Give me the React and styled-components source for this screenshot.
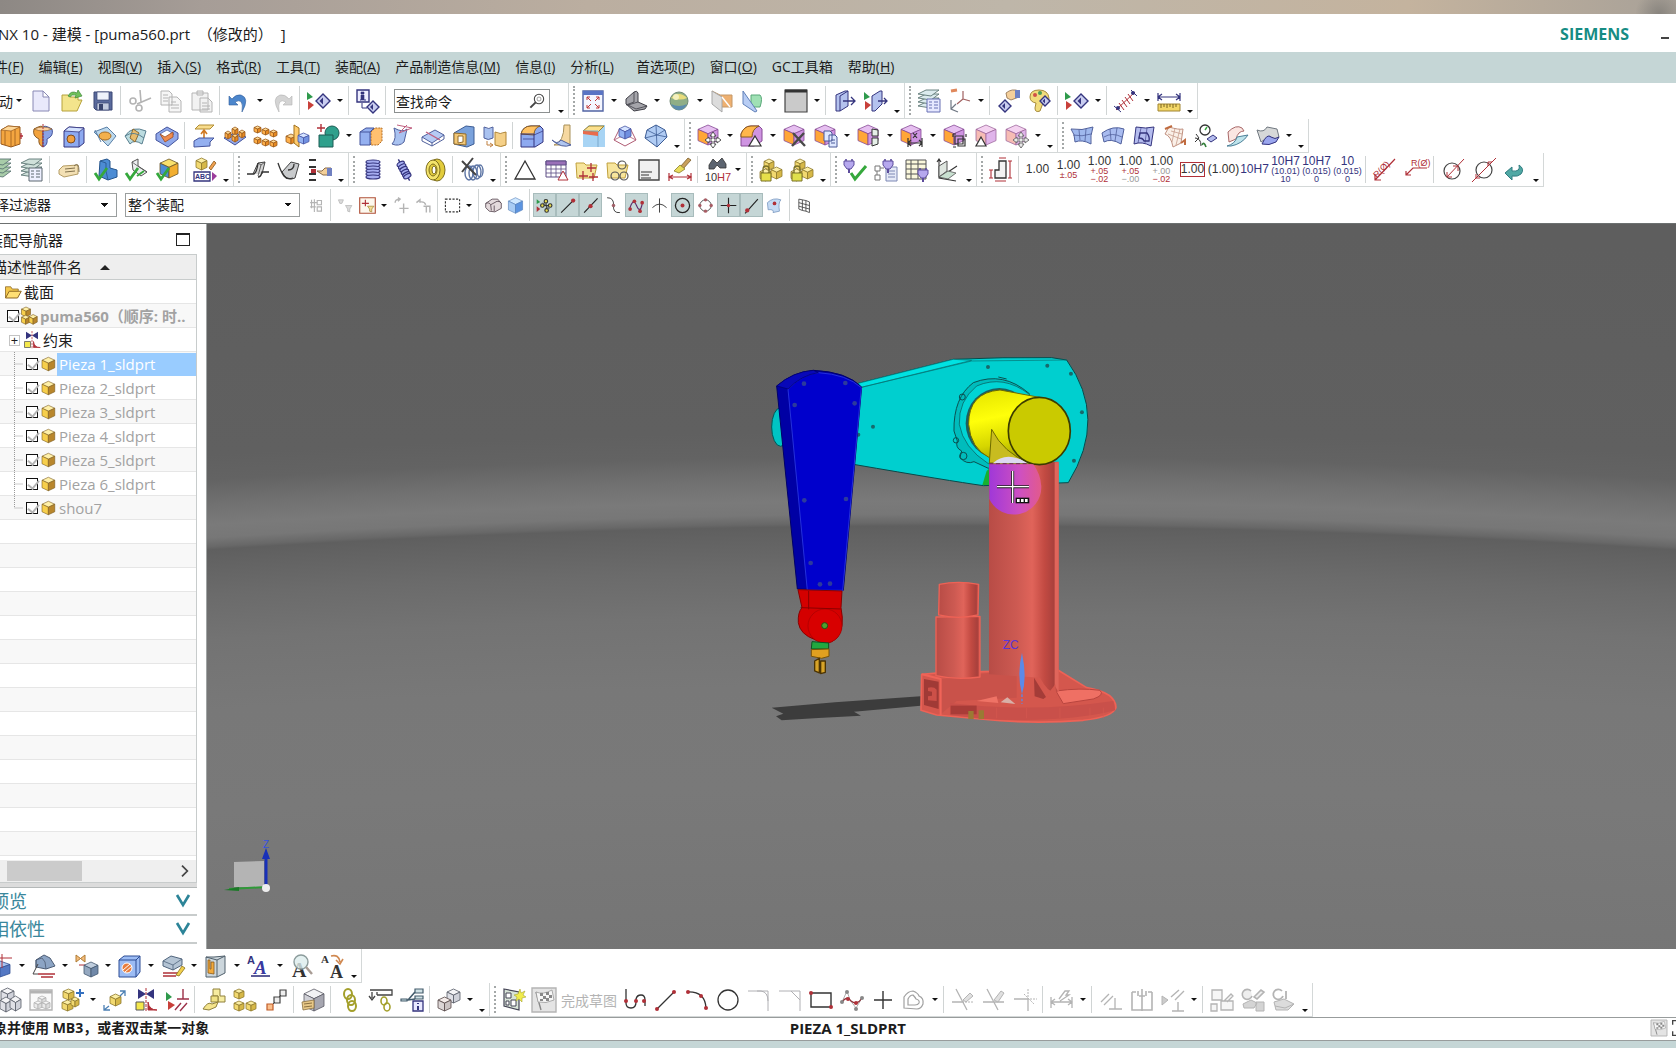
import React from 'react';
import styled, { createGlobalStyle } from 'styled-components';

const navy = '#34347e';
const red = '#b03038';
const dim = '#b4b4b4';

const blue = ['#d5e3ff', '#93b2f2', '#7090e0', '#4656a4'];
const orange = ['#ffdb95', '#ffb04a', '#e88a22', '#9a5a1c'];
const yellow = ['#fbeea4', '#f2d970', '#d6b848', '#8f7a2c'];
const grey = ['#f2f2f4', '#d0d0d6', '#a6a6b0', '#5a5a64'];
const pale = ['#f8f8f8', '#eaeaea', '#dcdcdc', '#b4b4b4'];
const violet = ['#e6bff0', '#ffa637', '#cf94e2', '#874a96'];
const pink = ['#f4d2f0', '#f6bcb4', '#dfb4ea', '#a06a9e'];
const ghost = ['#f4f4f6', '#dfe0e6', '#d0d2da', '#555a66'];

function P({ d, f = 'none', s = '#444450', w = 1, ...rest }) {
  return <path d={d} fill={f} stroke={s} strokeWidth={w} {...rest} />;
}

function Box({ x = 2, y = 2, w = 20, h = 20, c = blue }) {
  const m = x + w / 2;
  const a = y + h * 0.22;
  const b = y + h * 0.44;
  const e = y + h * 0.78;
  return (
    <g stroke={c[3]} strokeWidth="0.8" strokeLinejoin="round">
      <path fill={c[0]} d={`M${m} ${y}L${x + w} ${a}L${m} ${b}L${x} ${a}Z`} />
      <path fill={c[1]} d={`M${x} ${a}L${m} ${b}V${y + h}L${x} ${e}Z`} />
      <path fill={c[2]} d={`M${x + w} ${a}L${m} ${b}V${y + h}L${x + w} ${e}Z`} />
    </g>
  );
}

function Dot({ x, y, r = 2, c = red }) {
  return <circle cx={x} cy={y} r={r} fill={c} />;
}

const Diamond = ({ x, y, r = 6 }) => (
  <g>
    <P d={`M${x - r} ${y}L${x} ${y - r}L${x + r} ${y}L${x} ${y + r}Z`} f="#c9cdf0" s={navy} w={1.4} />
    <P d={`M${x - r / 2} ${y}L${x} ${y - r / 2}V${y + r / 2}Z`} f={navy} s="none" />
  </g>
);

const Play = ({ x = 0 }) => (
  <g>
    <P d={`M${x} 3v8l6-3z`} f="#2f9a4c" s="none" />
    <P d={`M${x + 1} 12v9l6-5z`} f="#c8403a" s="none" />
  </g>
);

const Stack = ({ tint = '#bcd8d4' }) => (
  <g>
    {[16, 12, 8, 4].map((y) => (
      <P key={y} d={`M1 ${y + 1}L9 ${y - 3}H22L14 ${y + 3}Z`} f={tint} s="#5c7674" w={0.9} />
    ))}
  </g>
);

const Move = ({ s = '#444', f = '#fff' }) => (
  <P
    d="M16 8l3 4h-2v3h3v-2l4 3-4 3v-2h-3v3h2l-3 4-3-4h2v-3h-3v2l-4-3 4-3v2h3v-3h-2z"
    f={f}
    s={s}
    w={0.9}
  />
);

const Sheet = ({ f = '#b7c8f0', s = '#50609c' }) => (
  <P d="M1 5Q12 7 23 3Q20 12 21 20Q12 15 5 18Q5 10 1 5Z" f={f} s={s} />
);

const Check = ({ x = 0, y = 0 }) => (
  <P d={`M${x + 1} ${y + 15}l4 6l8-11`} s="#35a83c" w={2.8} />
);

const Coil = ({ s = navy }) => (
  <g>
    {[4, 7, 10, 13, 16, 19].map((y) => (
      <ellipse key={y} cx="12" cy={y} rx="7" ry="2" fill="#a5adf0" stroke={s} strokeWidth="1.2" />
    ))}
  </g>
);

const Folder = () => (
  <P d="M1 5h8l2 2h11l-3 13H2z" f="#f7e59c" s="#c0a03c" />
);

const Arm = ({ c = yellow }) => (
  <g>
    <Box x={5} y={1} w={10} h={11} c={c} />
    <Box x={1} y={11} w={11} h={12} c={c} />
    <Box x={12} y={9} w={11} h={12} c={c} />
  </g>
);

const Lock = ({ c = '#e6df4a' }) => (
  <g>
    <P d="M4 15v-4a3 3 0 0 1 6 0v4" s="#7a7228" w={1.3} />
    <P d="M2 15h10v8H2z" f={c} s="#7a7228" />
  </g>
);

const Plug = ({ x = 0 }) => (
  <g transform={`translate(${x} 0)`}>
    <P d="M3 1v3M9 1v3" s="#5c4c9c" w={1.6} />
    <P d="M1 3h10v4l-3 4H4l-3-4z" f="#b6a8ee" s="#5c4c9c" />
    <P d="M6 11v4" s="#5c4c9c" w={2} />
  </g>
);

const Chain = () => (
  <g fill="none" stroke="#a4a02c" strokeWidth="2">
    <ellipse cx="10" cy="6" rx="4" ry="5" />
    <ellipse cx="13" cy="12" rx="4" ry="5" />
    <ellipse cx="14" cy="18" rx="4" ry="5" />
  </g>
);

const icons = {
  fresh: <P d="M4 2h10l6 6v14H4zM14 2v6h6" f="#e9e9fb" s="#8888b4" />,
  open: (
    <g>
      <P d="M2 6h6l2 2h8v3l4 0-5 11H2z" f="#f3e48c" s="#b6a23c" />
      <P d="M8 7q3-6 9-3l1-3 4 6-7 2 1-3q-4-1-6 2z" f="#6fc05a" s="#3f8a3a" w={0.7} />
    </g>
  ),
  save: (
    <g>
      <P d="M3 3h18v18H5l-2-2z" f="#5a6a9c" s="#3a4674" />
      <P d="M6 3h12v8H6z" f="#eef2fa" s="#3a4674" w={0.7} />
      <P d="M6 14h12v7H6z" f="#c2cade" s="#3a4674" w={0.7} />
      <P d="M8 15h4v6H8z" f="#39446e" s="none" />
    </g>
  ),
  cut: (
    <g>
      <P d="M12 1l1 12M23 9L9 15" s={dim} w={1.6} />
      <circle cx="5" cy="12" r="3" fill="none" stroke={dim} strokeWidth="1.6" />
      <circle cx="11" cy="19" r="3" fill="none" stroke={dim} strokeWidth="1.6" />
    </g>
  ),
  copy: <P d="M2 2h8l3 3v11H2zM10 8h8l4 4v11H10zM4 6h5M4 9h5M4 12h5M12 13h5M12 16h8M12 19h8" f="#f6f6f6" s={dim} />,
  paste: <P d="M2 4h16v17H2zM7 2h6v4H7zM10 9h8l4 4v10H10zM12 14h5M12 17h8M12 20h8" f="#f2f2f2" s={dim} />,
  undo: <P d="M2 7v9h9l-3-3q9-5 7 10q8-14-1-17q-5-1-9 4z" f="#4c86cc" s="#34609c" w={0.6} />,
  redo: <P d="M22 7v9h-9l3-3q-9-5-7 10q-8-14 1-17q5-1 9 4z" f="#d4d4d4" s={dim} w={0.6} />,
  play: (
    <g>
      <Play />
      <Diamond x={16} y={12} r={7} />
    </g>
  ),
  info: (
    <g>
      <P d="M1 1h12v12H1z" f="#eef" s={navy} w={1.4} />
      <P d="M5 3h3v2H5zM5 6h3v5h2H4h1z" f={navy} s={navy} w={0.6} />
      <P d="M6 14v5h5" s={navy} />
      <Diamond x={17} y={18} r={6} />
    </g>
  ),
  fit: (
    <g>
      <P d="M2 2h20v20H2z" f="#f4f6ff" s="#5264a4" w={1.4} />
      <P d="M2 2h20v4H2z" f="#5a74c4" s="none" />
      <P d="M10 12L6 8m0 3V8h3M14 12l4-4m0 3V8h-3M10 15l-4 4m0-3v3h3M14 15l4 4m0-3v3h-3" s="#c03838" />
    </g>
  ),
  orient: (
    <g>
      <P d="M2 10L10 3q3-2 4 1v9l9 4-2 3-11 2-8-7z" f="#a4a4aa" s="#404048" />
      <P d="M14 13L4 16M10 3v10l-8 3M4 16l8 4 11-3" s="#404048" w={0.8} />
    </g>
  ),
  sphere: (
    <g>
      <circle cx="12" cy="12" r="9" fill="#8fae86" stroke="#6f8a74" />
      <P d="M4 9q8-8 16 0q-6 3-16 0z" f="#e8dc7c" s="none" />
      <P d="M4 15q8 4 16 0q-3 6-8 6t-8-6z" f="#5b8cae" s="none" />
      <circle cx="9" cy="8" r="3" fill="#f4f0bc" />
    </g>
  ),
  section: (
    <g>
      <P d="M2 2l8 4h12v12H12z" f="#eeb070" s="#c49868" />
      <P d="M2 2l10 6v15L2 15z" f="#dcdcdc" s="#a8a8a8" />
      <P d="M12 8l8 10" s="#fff" w={1.4} />
    </g>
  ),
  clip: (
    <g>
      <P d="M10 6h9q3 3 0 12h-9z" f="#9fe0b4" s="#58a878" />
      <P d="M2 2l14 20-2 1L2 15z" f="#b8cdf4" s="#6080b8" />
    </g>
  ),
  face: (
    <g>
      <P d="M1 1h22v22H1z" f="#cacaca" s="#444" w={1.2} />
      <P d="M1 2h22" s="#333" w={3} />
    </g>
  ),
  clipSet: (
    <g>
      <P d="M3 6l9-4h3v15L7 22H3z" f="#b4c2ee" s={navy} />
      <P d="M7 7v15M7 7l8-5" s={navy} />
      <P d="M10 12h12m-4-4l4 4-4 4" s={navy} w={1.3} />
    </g>
  ),
  clipPlay: (
    <g>
      <Play />
      <P d="M8 7l8-5h2v13l-7 7H8z" f="#b4c2ee" s={navy} />
      <P d="M14 12h9m-3-3l3 3-3 3" s={navy} w={1.3} />
    </g>
  ),
  layers: (
    <g>
      <Stack tint="#dcebee" />
      <P d="M10 10h13v13H10z" f="#e6e8ff" s="#6870b4" />
      <P d="M12 13h3M12 16h3M12 19h3M17 13h4M17 16h4M17 19h4" s="#6870b4" />
    </g>
  ),
  axes: (
    <g>
      <P d="M3 2l6-1" s="#e0885c" w={3} />
      <P d="M15 2v8l-6 5M15 10l7 2" s="#a06060" w={1.2} />
      <P d="M3 11v9l7 3M3 20l5-5" s="#707884" w={1.2} />
    </g>
  ),
  showHide: (
    <g>
      <P d="M9 4q6-5 13-2v6l-8 3-4-2z" f="#f4cf9a" s="#8a6a48" w={0.8} />
      <P d="M18 1h5v8h-5z" f="#6c80c4" s="none" />
      <Diamond x={8} y={17} r={6} />
    </g>
  ),
  palette: (
    <g>
      <P d="M2 8q0-7 9-7t10 8q0 5-6 5l-3 8q-5 2-5-3l1-5q-6-1-6-6z" f="#f1dc7c" s="#a68a3c" />
      <Dot x={7} y={6} c="#d05048" />
      <Dot x={12} y={4} c="#4c9c58" />
      <Diamond x={17} y={12} r={5} />
    </g>
  ),
  measureLine: (
    <g>
      <P d="M2 21L21 3" s={red} />
      <P d="M5 14l5 7M8 11l5 7M11 8l5 7M14 5l5 7" s={red} />
      <P d="M0 17l7 6M17 1l6 6" s={navy} />
      <Dot x={4} y={19} r={2} c={navy} />
      <Dot x={19} y={4} r={2} c={navy} />
    </g>
  ),
  ruler: (
    <g>
      <P d="M1 4v8M23 4v8M1 8h22M5 5L1 8l4 3M19 5l4 3-4 3" s={navy} w={1.2} />
      <P d="M1 15h22v7H1z" f="#f3d768" s="#a08430" />
      <P d="M4 15v4M7 15v3M10 15v4M13 15v3M16 15v4M19 15v3" s="#7a6420" />
    </g>
  ),
  extrude: (
    <g>
      <P d="M1 6l7-4 12 1v17l-9 3-10-3z" f="#f4a640" s="#9a5a1c" />
      <P d="M1 6l7-4 12 1-9 4z" f="#ffd898" s="#9a5a1c" w={0.7} />
      <P d="M5 7v14M11 7v16M15 5v16" s="#9a5a1c" w={0.8} />
      <P d="M20 12h3m-2-3v6" s={red} w={1.3} />
    </g>
  ),
  revolve: (
    <g>
      <P d="M3 5q9-5 9-1v19q-5-2-4-8Q1 12 3 5z" f="#f2a23c" s="#8a5a24" />
      <P d="M21 5q-9-5-9-1v19q5-2 4-8q7-3 5-10z" f="#8aa2e4" s="#44549c" />
      <P d="M3 5q9-4 18 0-9 4-18 0z" f="#f8cfa0" s="#8a5a24" w={0.6} />
      <P d="M12 0v24" s={red} strokeDasharray="2 1" />
    </g>
  ),
  hole: (
    <g>
      <P d="M2 7l5-4 15 1v15l-5 4H2z" f="#8eaaf0" s={navy} />
      <P d="M2 7l5-4 15 1-5 4z" f="#d5e3ff" s={navy} w={0.8} />
      <P d="M17 8v15" s={navy} w={0.8} />
      <circle cx="9" cy="15" r="4" fill="#f0a040" stroke="#804c1c" />
    </g>
  ),
  emboss: (
    <g>
      <P d="M1 8l13-5 9 9-8 10z" f="#bcd8ec" s="#5a80a8" />
      <ellipse cx="12" cy="12" rx="6" ry="4" fill="#f2b04c" stroke="#a46c24" />
      <P d="M2 6l6 12" s="#5a80a8" />
    </g>
  ),
  offsetEmboss: (
    <g>
      <P d="M1 12Q8 1 22 7l-4 13Q10 15 6 20z" f="#bcdce0" s="#5a8090" />
      <P d="M9 5l6 4-4 9-5-4z" f="#e8bc6c" s="#8a6a34" />
      <P d="M1 12Q10 6 20 14" s="#5a8090" />
    </g>
  ),
  rib: (
    <g>
      <P d="M1 10l11-7 11 6v6l-10 8-12-7z" f="#90a8ea" s="#44549c" />
      <P d="M5 10l7-4 7 4-7 6z" f="#fff" s="#44549c" w={0.7} />
      <P d="M5 10l5 3 8-5v5l-8 5z" f="#f08c4c" s="#9a4c24" w={0.8} />
    </g>
  ),
  datum: (
    <g>
      <P d="M3 5l4-4h15l-4 4z" f="#f8dc8c" s="#b08c34" />
      <P d="M12 16V7m-3 3l3-4 3 4" s="#d07820" w={1.6} />
      <P d="M2 17l5-3h15l-4 4v4l-16 1z" f="#94b0f0" s="#44549c" />
    </g>
  ),
  pattern: (
    <g>
      <P d="M1 14l11-5 11 4-11 8z" f="#94a8e8" s="#44549c" />
      <Box x={2} y={7} w={6} h={8} c={orange} />
      <Box x={9} y={3} w={6} h={8} c={orange} />
      <Box x={9} y={10} w={6} h={8} c={orange} />
      <Box x={16} y={6} w={6} h={8} c={orange} />
    </g>
  ),
  patternGeo: (
    <g>
      {[[0, 2], [8, 4], [16, 6], [0, 13], [8, 15], [16, 16]].map(([x, y]) => (
        <Box key={`${x}-${y}`} x={x} y={y} w={7} h={7} c={orange} />
      ))}
    </g>
  ),
  mirror: (
    <g>
      <Box x={1} y={10} w={10} h={10} c={orange} />
      <P d="M9 1l5 3v19l-5-4z" f="#ffcb6c" s="#a0701c" />
      <Box x={13} y={9} w={11} h={11} />
    </g>
  ),
  unite: (
    <g>
      <circle cx="16" cy="9" r="7" fill="#2fa08c" stroke="#1c5c54" />
      <P d="M3 11h14v12H3z" f="#2fa08c" s="#1c5c54" />
      <P d="M5 0v8M1 4h8" s={red} w={1.4} />
    </g>
  ),
  split: (
    <g>
      <P d="M1 8l6-4h8v13l-4 4H1z" f="#94b0f0" s="#44549c" />
      <P d="M12 8l4-4h7v13l-4 4h-7z" f="#ffc070" s="#b06c24" strokeDasharray="2 1" />
      <P d="M1 8h10v13M11 8l4-4" s="#44549c" />
    </g>
  ),
  trimSheet: (
    <g>
      <P d="M4 4q9 5 13 1L14 18Q9 23 2 20Q7 15 4 4z" f="#a9c2f0" s="#50609c" />
      <P d="M7 1l15 3L9 9M9 9l8-8" s="#c06080" />
    </g>
  ),
  divide: (
    <g>
      <P d="M1 13l13-7 9 5-12 8z" f="#b6cbf4" s="#50609c" />
      <P d="M1 13v4l10 5v-3M11 22l12-7v-4" s="#50609c" />
      <P d="M5 8l14 8" s="#c06080" w={1.4} />
    </g>
  ),
  shell: (
    <g>
      <P d="M2 9l12-7 8 1v17l-7 3L2 20z" f="#7aa2dc" s="#3c5c94" />
      <P d="M2 9l12 1v11L2 20z" f="#f2c878" s="#946c28" />
      <P d="M6 12h5v6l-5 1z" f="#fff" s="#946c28" />
    </g>
  ),
  thicken: (
    <g>
      <P d="M1 3q5 3 9 0v11q-5 3-9 0z" f="#a9c2f0" s="#50609c" />
      <P d="M12 8q5 3 11 0v13q-5 3-11 0z" f="#f5d088" s="#b08434" />
      <P d="M4 17v4h6m-3-2l3 2-3 2" s="#c08040" />
    </g>
  ),
  blend: (
    <g>
      <P d="M1 10q2-8 10-8h9l3 3v13l-8 5H1z" f="#8eaaf0" s={navy} />
      <P d="M1 10q2-8 10-8l9 0q-6 2-6 9z" f="#ffc264" s="#8a5c1c" />
      <P d="M1 10h13v13" s={navy} />
      <P d="M3 15h11M14 11l9-4" s={navy} w={0.7} />
    </g>
  ),
  faceBlend: (
    <g>
      <P d="M13 1h6v20H3q10-3 10-20z" f="#f6d8a0" s="#a89058" />
      <P d="M1 16q5 5 9 0l10 5q-9 4-19-5z" f="#b0c6f0" s="#50609c" />
    </g>
  ),
  chamfer: (
    <g>
      <P d="M1 7l6-6h16v22H1z" f="#a8d4f4" s="none" />
      <P d="M1 7l6-5h15l-6 6z" f="#fbe08c" s="#a08434" />
      <P d="M1 7h15v16" s="#7aa8cc" />
      <P d="M1 7l15 1v4L1 10z" f="#e86c4c" s="none" />
    </g>
  ),
  draft: (
    <g>
      <P d="M7 4L1 16l11 6 11-6-6-12" s="#b05c74" />
      <P d="M1 16l6-3h10l6 3" s="#b05c74" w={0.8} />
      <Box x={6} y={2} w={12} h={13} />
    </g>
  ),
  bodyTrim: (
    <g>
      <P d="M12 1l9 5 2 7-10 10L1 14l2-8z" f="#b0ccf4" s="#3c5c94" />
      <P d="M12 1l1 22M3 6l10 5 8-5M1 14l12-3 10 2" s="#3c5c94" w={0.8} />
    </g>
  ),
  moveFace: (
    <g>
      <Box x={1} y={1} c={violet} />
      <Move />
    </g>
  ),
  pullFace: (
    <g>
      <P d="M1 10q3-8 10-8h8l3 3v12l-8 5H1z" f="#cf94e2" s="#874a96" />
      <P d="M1 10q3-8 10-8h8q-7 3-7 11H1z" f="#ffb64c" s="#8a5c1c" />
      <P d="M15 12l6 10H9z" f="#fff" s="#333" w={1.2} />
    </g>
  ),
  deleteFace: (
    <g>
      <Box x={1} y={1} c={violet} />
      <P d="M10 9l12 13M21 9L9 22" s="#4a4a4a" w={2.4} />
    </g>
  ),
  copyFace: (
    <g>
      <Box x={1} y={1} c={violet} />
      <P d="M10 7h6l2 2v8h-8zM15 11h6l2 2v10h-8zM17 16h4M17 19h4" f="#dfe8ff" s="#4a5a98" />
    </g>
  ),
  groupFace: (
    <g>
      <Box x={1} y={1} c={violet} />
      <P d="M15 5l6 1v6h-6zM15 14h6v6l-6 2z" f="#e6f0e8" s="#333" />
    </g>
  ),
  dimFace: (
    <g>
      <Box x={1} y={1} c={violet} />
      <P d="M8 14v9M22 14v9M8 19h14M11 16l-3 3 3 3M19 16l3 3-3 3M13 9l4 5m0-5l-4 5" s="#333" w={1.2} />
    </g>
  ),
  patternFace: (
    <g>
      <Box x={1} y={1} c={violet} />
      <P d="M12 12h8v8h-8zM15 15h7v7h-7zM10 10h3M10 10v3M23 10v3M10 23h3" f="none" s="#333" w={1.2} />
    </g>
  ),
  pinkTri: (
    <g>
      <Box x={2} y={1} c={pink} />
      <P d="M7 13l5 9H2z" f="#fff" s="#333" w={1.2} />
    </g>
  ),
  pinkMove: (
    <g>
      <Box x={1} y={1} c={pink} />
      <Move s="#666" f="#e8e8e8" />
    </g>
  ),
  surf1: (
    <g>
      <Sheet f="#9fb8ee" />
      <P d="M9 6l1 10M16 5l-1 12M3 11q9 2 18-1" s="#50609c" w={0.8} />
    </g>
  ),
  surf2: (
    <g>
      <P d="M1 9Q12 1 23 5L20 20Q10 14 3 18Z" f="#a9bcf0" s="#50609c" />
      <P d="M9 5l1 11M16 4l-2 13M3 13q8-5 18 0" s="#50609c" w={0.8} />
    </g>
  ),
  surf3: (
    <g>
      <P d="M4 3Q14 5 22 3L19 22Q10 17 2 20Z" f="#b4bcee" s={navy} />
      <P d="M8 9h7q3 4 2 8h-5q-1-3-5-3z" s={navy} w={1.3} />
      <P d="M9 4L6 19M15 4l-2 15" s={navy} w={0.6} />
    </g>
  ),
  surf4: (
    <g>
      <P d="M6 3q10 3 14 2l-2 14-8 4Q8 12 2 10z" f="#faf0e8" s="#c09080" />
      <P d="M8 7l11 3M5 10l13 5M12 4L9 18M17 5l-4 16" s="#c09080" w={0.7} />
      <P d="M2 5l7-3M18 19l4-3v5" s="#c06c40" w={2} />
    </g>
  ),
  surf5: (
    <g>
      <circle cx="11" cy="6" r="5" fill="#fff" stroke="#333" strokeWidth="1.3" />
      <P d="M11 6l2-3" s="#35a83c" w={1.4} />
      <P d="M1 14q6 0 6 8M2 10l3 4-4 4" s="#333" />
      <P d="M13 15l6-4 4 3-6 4z" f="#b4bcee" s={navy} />
      <P d="M8 21q2-4 4 2" s="#35803c" w={1.6} />
    </g>
  ),
  surf6: (
    <g>
      <P d="M3 8q8-8 14-4l2 3q-6 0-8 8l-7 3z" f="#fbe6e2" s="#a86868" />
      <P d="M2 22q8-2 10-9l11-2q-6 9-17 11z" f="#bfe4ec" s="#4c8098" />
    </g>
  ),
  surf7: (
    <g>
      <P d="M1 6q7 3 10-3l10 2 2 8q-6 5-9-1l-9 6z" f="#d6d8d8" s="#707880" />
      <P d="M6 20q5-11 9-7 4 3 8 0l-3 5q-7 4-14 2z" f="#9aa6ee" s={navy} />
    </g>
  ),
  stack: <Stack tint="#a8cca8" />,
  stackList: (
    <g>
      <Stack tint="#cfe0da" />
      <P d="M9 10h13v13H9z" f="#eef0ff" s="#5c6870" />
      <P d="M11 13h3M11 16h3M11 19h3M16 13h4M16 16h4M16 19h4" s="#5c6870" />
    </g>
  ),
  tag: (
    <g>
      <P d="M2 12l4-4 15-1v9l-14 3-5-3z" f="#f3e0b4" s="#b49c64" />
      <P d="M8 11l10-1M8 14l10-1M17 8q5-5 5 6" s="#80704c" />
    </g>
  ),
  checkBlue: (
    <g>
      <P d="M6 3l7-2 3 2v7l7 2v7l-9 3-9-4z" f="#4c8cd4" s="#24548c" />
      <P d="M6 3l6 2v8l2 9" s="#24548c" w={0.8} />
      <Check />
    </g>
  ),
  checkGrey: (
    <g>
      <P d="M7 4l6-3v7l9 6-6 4-8-6z" f="#eceef0" s="#555" />
      <P d="M7 4l7 5 8 5" s="#555" w={0.8} />
      <Check />
      <P d="M12 18l7-5" s="#35a83c" w={2} />
    </g>
  ),
  checkYellow: (
    <g>
      <Box x={4} y={1} w={18} h={19} c={['#f8e06c', '#4c8cd4', '#f2ae30', '#6a5424']} />
      <Check />
    </g>
  ),
  abc: (
    <g>
      <Box x={3} y={0} w={11} h={12} c={yellow} />
      <P d="M16 10l5-7 2 2-5 7z" f="#f0a050" s="#8a5c1c" w={0.8} />
      <P d="M1 14h16v9H1z" f="#fff" s={navy} w={1.3} />
      <text x="2" y="21" fontSize="7" fontWeight="bold" fontFamily="Liberation Sans" fill={navy}>ABC</text>
      <P d="M19 14v9l5-5z" f="#9c3c9c" s="none" />
    </g>
  ),
  plane1: (
    <g>
      <P d="M7 16L12 5l7-1-3 12" f="#d6d6d6" s="#444" />
      <P d="M12 5l3 2 4-3M15 7l-3 11" s="#444" w={0.8} />
      <P d="M1 16h7q3-2 4-11M12 19q3 0 4-5h7" s="#333" w={1.3} />
    </g>
  ),
  plane2: (
    <g>
      <P d="M5 14L14 4l8 2-4 14q-8 4-13-6z" f="#c8cacc" s="#444" />
      <P d="M1 5q3 9 6 13t9 2M11 12q6 0 6-6" s="#333" w={1.3} />
    </g>
  ),
  list: (
    <g>
      <P d="M1 2h7M1 9h7M1 16h7M1 22h7" s="#333" w={1.8} />
      <P d="M3 11h5v4H3z" f={red} s="none" />
      <P d="M9 13h5l3-3h6v7h-8z" f="#f4d098" s="#8a6a48" />
      <P d="M19 10h5v8h-5z" f="#7080c0" s="none" />
    </g>
  ),
  spring: <Coil />,
  spring2: (
    <g transform="rotate(-28 12 12)">
      <P d="M12 0v4M12 20v4" s={navy} w={1.4} />
      {[5, 8, 11, 14, 17, 19].map((y) => (
        <ellipse key={y} cx="12" cy={y} rx="4" ry="2" fill="#a5adf0" stroke={navy} strokeWidth="1.2" />
      ))}
    </g>
  ),
  tyre: (
    <g>
      <ellipse cx="14" cy="12" rx="8" ry="11" fill="#e2cc3c" stroke="#7c6c1c" />
      <ellipse cx="10" cy="12" rx="7" ry="10" fill="#f4e46c" stroke="#7c6c1c" />
      <ellipse cx="10" cy="12" rx="4" ry="6" fill="#e2cc3c" stroke="#7c6c1c" />
      <ellipse cx="11" cy="12" rx="2" ry="4" fill="#fff" stroke="#7c6c1c" />
    </g>
  ),
  springCut: (
    <g>
      <g fill="none" stroke="#5c74a4" strokeWidth="1.4">
        <ellipse cx="9" cy="15" rx="4" ry="7" />
        <ellipse cx="13" cy="15" rx="4" ry="7" />
        <ellipse cx="17" cy="14" rx="4" ry="7" />
        <ellipse cx="20" cy="13" rx="3" ry="6" />
      </g>
      <P d="M2 3l14 14M13 0L2 14" s="#444" w={2} />
    </g>
  ),
  tri: <P d="M12 3l10 18H2z" s="#333" w={1.3} />,
  tableIcon: (
    <g>
      <P d="M2 3h20v16H2z" f="#fff" s="#5c4c84" />
      <P d="M2 3h20v4H2z" f="#9a70b8" s="#5c4c84" />
      <P d="M2 11h20M2 15h20M7 7v12M12 7v12M17 7v12" s="#5c4c84" w={0.8} />
      <P d="M19 13l5 9H14z" f="#fff" s={red} />
    </g>
  ),
  folderPlus: (
    <g>
      <Folder />
      <P d="M16 5v9M12 10h9M8 13v9M4 18h9M18 15v8M14 19h9" s={red} w={1.3} />
    </g>
  ),
  folderCircle: (
    <g>
      <Folder />
      <g fill="none" stroke="#555" strokeWidth="1.2">
        <circle cx="16" cy="7" r="4" />
        <circle cx="9" cy="18" r="4" />
        <circle cx="18" cy="18" r="4" />
      </g>
    </g>
  ),
  note: (
    <g>
      <P d="M2 2h20v20H2z" f="#f0f0f0" s="#444" w={1.4} />
      <P d="M4 14h11M4 17h8M4 20h10" s="#333" w={1.2} />
    </g>
  ),
  brush: (
    <g>
      <P d="M20 0l3 2-8 9-3-2z" f="#c8a05c" s="#7a5c28" w={0.8} />
      <P d="M12 7l5 4-6 4-5-2z" f="#e8dc5c" s="#8a7c28" w={0.8} />
      <P d="M1 15v8M23 15v8M1 19h22M5 17l-4 2 4 2M19 17l4 2-4 2" s={red} w={1.2} />
    </g>
  ),
  find: (
    <g>
      <P d="M4 7l4-6 4 4 5-5 4 6v4h-6l-3-3-3 4H4z" f="#5c6470" s="#333" w={0.8} />
      <text x="0" y="23" fontSize="11" fontFamily="Liberation Sans" fill="#333">10</text>
      <text x="12" y="23" fontSize="11" fontFamily="Liberation Sans" fill={red}>H7</text>
    </g>
  ),
  lockBox: (
    <g>
      <Arm />
      <Lock />
    </g>
  ),
  lockBox2: (
    <g>
      <Arm />
      <Lock c="#e0e04c" />
    </g>
  ),
  plugCheck: (
    <g>
      <Plug />
      <P d="M8 15l4 6L23 8" s="#35a83c" w={3} />
    </g>
  ),
  plugList: (
    <g>
      <P d="M1 8h5v5H1zM1 17h5v5H1zM6 10h4M3 13v4" s="#777" />
      <P d="M12 9h11v14H12zM14 13h7M14 16h7M14 19h7" f="#e6eaf8" s="#7c88b4" />
      <Plug x={8} />
    </g>
  ),
  plugTable: (
    <g>
      <P d="M1 2h20v19H1zM1 6h20M1 11h20M1 16h20M6 2v19M13 2v19" f="#fbf8dc" s="#555" />
      <g transform="translate(12 9)"><Plug /></g>
    </g>
  ),
  axesPlane: (
    <g>
      <P d="M3 1v19l17 3M3 20L21 8M1 4l2-3 2 3" s="#333" w={1.1} />
      <P d="M3 8l8-5v10l-8 6z" f="#dfe6e0" s="#555" />
      <P d="M3 19l9-6 8 2-8 6z" f="#c8e0d0" s="#555" w={0.8} />
    </g>
  ),
  section2: (
    <g>
      <P d="M10 3h7v17H6v-8h4z" f="#f2f2f2" s="#333" w={1.3} />
      <P d="M10 0h7M21 3v17M2 12v8M6 23h11M19 3h4M19 20h4M0 12h4M0 20h4" s={red} w={1.1} />
    </g>
  ),
  radius1: (
    <g>
      <P d="M22 1L2 22m0-6v6h6" s={red} w={1.2} />
      <text x="-1" y="15" fontSize="9" fontFamily="Liberation Sans" fill={red} transform="rotate(-46 8 12)">R(Ø)</text>
    </g>
  ),
  radius2: (
    <g>
      <P d="M23 10H9L2 17m0-4v4h5" s={red} w={1.2} />
      <text x="7" y="8" fontSize="9" fontFamily="Liberation Sans" fill={red}>R(Ø)</text>
    </g>
  ),
  dia1: (
    <g>
      <circle cx="11" cy="13" r="8" fill="none" stroke="#444" strokeWidth="1.2" />
      <P d="M23 1L6 19m0-5v5h5M12 8h5v5" s={red} />
    </g>
  ),
  dia2: (
    <g>
      <circle cx="12" cy="12" r="8" fill="none" stroke="#444" strokeWidth="1.2" />
      <P d="M24 0L0 24M4 16v4h4M16 8V4h4" s={red} />
    </g>
  ),
  turn: <P d="M2 15l7-6v4q9 1 7-6q6 4 2 9-3 3-9 2v4z" f="#4fa8a4" s="#307c80" />,
  greyCross: <P d="M9 3v18M3 8h10M3 14h8M13 5h6v6h-6zM13 14h6v6h-6zM5 4v12" s={dim} w={1.6} />,
  greyFilter: <P d="M2 4h7l-2 5H4zM12 12h9l-3 5v4l-3-1v-3z" f="#dcdcdc" s={dim} />,
  boxFilter: (
    <g>
      <P d="M1 1h22v22H1z" f="#fdf8ee" s="#b05038" w={1.6} />
      <P d="M9 4v9M4 9h10" s={red} w={1.6} />
      <P d="M12 13h9l-3 4v4l-3-1v-3z" f="#f4dc94" s="#a08430" />
    </g>
  ),
  greyMove: <P d="M3 8q0-5 7-5m-3-2l3 2-3 3M15 9v14M9 16h13" s={dim} w={2} />,
  greyBack: <P d="M2 8l5-4v3q7-1 8 4M12 13h9v9M16 13v9" f="none" s={dim} w={2} />,
  marquee: <P d="M2 3h20v18H2z" s="#333" w={1.6} strokeDasharray="3 2" />,
  boxGrey: (
    <g>
      <P d="M1 9l9-6h8l5 6v7l-9 5-8-1-5-5z" f="#e4dadc" s="#5a4a54" w={1.2} />
      <P d="M1 9q5-2 7 2l1 8M8 11l9-5q5 0 6 3M13 12v8" s="#5a4a54" w={1.2} />
    </g>
  ),
  boxBlue: <Box x={2} y={1} w={20} h={22} c={['#cfe8ff', '#a8ccf4', '#5c94e0', '#4c78b4']} />,
  snapAll: (
    <g>
      <P d="M1 3v7l5-3z" f="#2f9a4c" s="none" />
      <P d="M1 13v8l5-4z" f={red} s="none" />
      <P d="M9 12h11M14 6l1 13M10 8l9 9" s="#333" w={1.3} />
      <g fill="#e8dc4c" stroke="#333" strokeWidth="1.6">
        <circle cx="14" cy="6" r="2.5" />
        <circle cx="9" cy="12" r="2.5" />
        <circle cx="20" cy="12" r="2.5" />
        <circle cx="15" cy="19" r="2.5" />
      </g>
    </g>
  ),
  snapEnd: (
    <g>
      <P d="M3 22L20 5" s="#222" w={1.6} />
      <Dot x={20} y={5} r={3} />
    </g>
  ),
  snapMid: (
    <g>
      <P d="M3 22L22 2" s="#222" w={1.6} />
      <Dot x={12} y={13} r={3} />
    </g>
  ),
  snapCurve: (
    <g>
      <P d="M3 1q10 0 9 11t9 10" s="#444" w={1.4} />
      <Dot x={12} y={12} r={2.5} c="#a06068" />
    </g>
  ),
  snapPoly: (
    <g>
      <P d="M2 18Q7 0 12 12t8-2l-3 10" s="#5c2c6c" w={1.6} />
      <Dot x={3} y={17} r={2.6} />
      <Dot x={9} y={6} r={2.6} />
      <Dot x={20} y={8} r={2.6} />
      <Dot x={17} y={20} r={2.6} />
    </g>
  ),
  snapInt: <P d="M12 2v20M2 15q10-10 20 0" s="#444" w={1.4} />,
  snapCenter: (
    <g>
      <circle cx="12" cy="12" r="10" fill="none" stroke="#222" strokeWidth="1.8" />
      <Dot x={12} y={12} r={2.8} />
    </g>
  ),
  snapQuad: (
    <g>
      <circle cx="12" cy="12" r="8" fill="none" stroke="#555" strokeWidth="1.4" />
      <Dot x={12} y={4} r={2.4} c="#a85c64" />
      <Dot x={12} y={20} r={2.4} c="#a85c64" />
      <Dot x={4} y={12} r={2.4} c="#a85c64" />
      <Dot x={20} y={12} r={2.4} c="#a85c64" />
    </g>
  ),
  snapPoint: (
    <g>
      <P d="M12 1v22M1 12h22" s="#222" w={1.6} />
      <Dot x={12} y={12} r={2.4} />
    </g>
  ),
  snapOn: (
    <g>
      <P d="M3 23L21 3" s="#222" w={1.6} />
      <Dot x={6} y={19} r={3} />
    </g>
  ),
  snapFace: (
    <g>
      <P d="M2 8q8-8 19-4-4 4-2 16l-9 2q2-5-7-4z" f="#c4daf4" s="#6c8cb8" />
      <Dot x={12} y={9} r={2.6} />
    </g>
  ),
  snapGrid: <P d="M4 3l5 1 5 1 5 2v15l-5-2-5-1-5-2zM4 8l15 4M4 13l15 4M9 4v15M14 5v15" s="#444" w={1.2} />,
  // bottom bars
  pmi1: (
    <g>
      <Box x={1} y={7} w={20} h={16} c={['#a8c4f0', '#7498dc', '#5478c4', '#345094']} />
      <P d="M13 0v14M8 4h15" s={red} />
    </g>
  ),
  pmi2: (
    <g>
      <P d="M4 6l8-5 6 3 5 8-9 3-10-2z" f="#8ca4c4" s="#4c5c74" />
      <P d="M4 6l6-2 3 4 1 7M4 6v8" s="#4c5c74" w={0.8} />
      <P d="M6 10L1 20h5" s="#444" />
      <P d="M6 20h17M9 23h12" s={red} w={1.4} />
    </g>
  ),
  pmi3: (
    <g>
      <P d="M1 1l9 7V1L1 8z" f="#f4bc7c" s="#b07c34" />
      <P d="M4 11h6v5" s={red} />
      <Box x={9} y={8} w={14} h={15} c={['#c0cede', '#94a8c0', '#7088a8', '#445870']} />
    </g>
  ),
  pmi4: (
    <g>
      <P d="M1 6l5-4h16v16l-4 5H1z" f="#9cbcf4" s="#2c4c94" />
      <P d="M1 6h17v17M18 6l4-4" s="#2c4c94" />
      <circle cx="9" cy="14" r="5" fill="#e87c3c" stroke="#fff" />
      <P d="M5 16l7-6M7 18l7-6" s="#fff" />
    </g>
  ),
  pmi5: (
    <g>
      <P d="M2 7l8-5 11 3v6l-9 5-10-4z" f="#b4c4d4" s="#50647c" />
      <P d="M2 7l10 4 9-6M12 11v5" s="#50647c" w={0.8} />
      <P d="M2 19h15M2 22h13" s={red} w={1.3} />
      <P d="M15 21l6-9 3 2-6 8z" f="#f2d04c" s="#8a701c" w={0.8} />
    </g>
  ),
  pmi6: (
    <g>
      <P d="M2 3h8l11-1v17l-8 4H2z" f="#ccd6dc" s="#50606c" />
      <P d="M2 3l11 3v17M13 6l8-4" s="#50606c" />
      <P d="M4 6v13l6 1V8H7v7H6V6z" f="#f2aa3c" s="#8a5c1c" w={0.8} />
    </g>
  ),
  textA: (
    <g>
      <text x="0" y="10" fontSize="11" fontWeight="bold" fontFamily="Liberation Sans" fill={navy}>A</text>
      <text x="7" y="20" fontSize="19" fontWeight="bold" fontStyle="italic" fontFamily="Liberation Serif" fill="#3838a0">A</text>
      <P d="M4 22h19" s={navy} w={1.6} />
    </g>
  ),
  magA: (
    <g>
      <text x="2" y="23" fontSize="20" fontWeight="bold" fontFamily="Liberation Serif" fill="#333">A</text>
      <circle cx="11" cy="8" r="7" fill="#dcecec" fillOpacity="0.8" stroke="#8c9c9c" strokeWidth="1.4" />
      <P d="M16 13l6 7" s="#a89c94" w={2.4} />
    </g>
  ),
  swapA: (
    <g>
      <text x="0" y="9" fontSize="11" fontWeight="bold" fontFamily="Liberation Serif" fill="#333">A</text>
      <P d="M10 2q8-2 9 6m-4-2l4 4 3-5" s="#d08850" w={1.6} />
      <text x="9" y="24" fontSize="18" fontWeight="bold" fontFamily="Liberation Serif" fill="#333">A</text>
    </g>
  ),
  asm1: (
    <g>
      <Box x={3} y={0} w={13} h={14} c={ghost} />
      <Box x={2} y={9} w={12} h={15} c={ghost} />
      <Box x={12} y={8} w={11} h={15} c={ghost} />
    </g>
  ),
  asm2: (
    <g>
      <P d="M1 2h22v20H1z" f="#fafafa" s={dim} w={1.4} />
      <P d="M1 4h22" s={dim} w={3} />
      <Box x={9} y={8} w={8} h={8} c={pale} />
      <Box x={5} y={13} w={8} h={8} c={pale} />
      <Box x={13} y={13} w={8} h={8} c={pale} />
    </g>
  ),
  asm3: (
    <g>
      <Box x={3} y={1} w={11} h={11} c={yellow} />
      <Box x={2} y={12} w={11} h={11} c={yellow} />
      <Box x={11} y={9} w={8} h={10} c={yellow} />
      <P d="M20 1v8M16 5h8" s="#3470c0" w={2} />
    </g>
  ),
  asm4: (
    <g>
      <Box x={7} y={6} w={11} h={12} c={yellow} />
      <P d="M17 3h5v5M17 8l5-5M7 22H1v-5M1 22l5-4" s="#4c80b4" w={1.3} />
    </g>
  ),
  constrain: (
    <g>
      <P d="M4 1l8 5-8 5zM20 1l-8 5 8 5z" f={navy} s="none" />
      <P d="M12 0v24" s={red} strokeDasharray="3 1" />
      <P d="M2 14h8v8H2z" f="#f4e84c" s="#555" />
      <P d="M14 14q1 8 9 8h-9z" f={red} s={red} />
    </g>
  ),
  showCon: (
    <g>
      <P d="M1 4v9l6-4z" f="#2f9a4c" s="none" />
      <P d="M3 13v9l7-5z" f="#c8403a" s="none" />
      <P d="M18 1v10M12 11h12M10 22l6-7M15 23l7-8" s="#9c3048" w={1.4} />
    </g>
  ),
  asm5: (
    <g>
      <P d="M11 1h7v7h5v6h-7v-6h-5z" f="#f6eca0" s="#8f803c" />
      <P d="M9 8h7v6H9z" f="#f0e284" s="#8f803c" />
      <P d="M1 21q5-8 9-5l6-2-2 5-7 3z" f="#f4e48c" s="#8f803c" />
    </g>
  ),
  asm6: (
    <g>
      <Box x={1} y={1} w={10} h={10} c={yellow} />
      <Box x={1} y={13} w={10} h={10} c={yellow} />
      <Box x={13} y={13} w={10} h={10} c={yellow} />
    </g>
  ),
  asm7: (
    <g>
      <P d="M16 2h6v6h-6zM10 9h6v6h-6z" f="#eee" s="#444" w={1.2} />
      <P d="M3 16h6v6H3z" f="#fbc08c" s="#c05c28" w={1.2} />
      <P d="M9 16l2-2M15 9l2-2" s="#444" />
    </g>
  ),
  asm8: (
    <g>
      <Box x={3} y={1} w={20} h={22} c={grey} />
      <P d="M1 14l12-2v8l-11 2z" f="#e8c888" s="#8a7040" w={0.8} />
      <P d="M3 16l8-1M3 19l8-1" s="#8a7040" />
    </g>
  ),
  chain: <Chain />,
  chain2: (
    <g>
      <P d="M1 2h22v5H8M3 4v6m-3-2l3 4 3-4M8 4v3" s="#444" w={1.3} />
      <g fill="none" stroke="#a4a02c" strokeWidth="1.6">
        <ellipse cx="15" cy="13" rx="3" ry="4" />
        <ellipse cx="18" cy="19" rx="3" ry="4" />
      </g>
    </g>
  ),
  tree: (
    <g>
      <P d="M1 12h7M8 12l7-8M8 12l7-1" s="#445c6c" w={1.6} />
      <P d="M15 1h8v4h-8zM15 8h8v3h-8zM1 11h6v2H1z" f="#cfe0e4" s="#445c6c" w={1.2} />
      <P d="M13 13h10v10H13z" f="#e8e8ff" s={navy} w={1.3} />
      <P d="M18 15v1M18 18v4" s={navy} w={2} />
    </g>
  ),
  asm9: (
    <g>
      <Box x={10} y={1} w={13} h={14} c={ghost} />
      <Box x={1} y={9} w={13} h={14} c={['#f4ecea', '#dcd6d6', '#ccc4c4', '#554848']} />
    </g>
  ),
  sketch: (
    <g>
      <P d="M2 1l15 3v18L2 18z" f="#d8e4d8" s="#445" w={1.2} />
      <P d="M4 5h5v5H4zM4 13h3v4H4zM9 12h5v6H9z" f="#fff" s="#445" />
      <P d="M18 1l1 4 4-2-2 4 3 2-4 1v4l-3-3-3 2 1-4-3-2 4-1z" f="#f0ec4c" s="#a8a430" w={0.6} />
    </g>
  ),
  flag: (
    <g>
      <P d="M0 0h24v24H0z" f="#e4e4e4" s={dim} w={1.4} />
      <P d="M4 4l5 18" s="#888" w={1.4} />
      <P d="M4 4q7 3 16-2l2 10q-8 4-16 2z" f="#f6f6f6" s="#999" w={0.8} />
      <P d="M8 5h3v3H8zM14 4h3v3h-3zM11 8h3v3h-3zM17 7h3v3h-3zM8 11h3v2H8zM14 10h3v3h-3z" f="#888" s="none" />
    </g>
  ),
  profile: (
    <g>
      <P d="M3 1v14q0 5 5 5t5-6V11q1-4 5-4t4 5v6" s="#333" w={1.3} />
      <Dot x={3} y={13} />
      <Dot x={13} y={13} />
      <Dot x={21} y={13} />
    </g>
  ),
  line: (
    <g>
      <P d="M3 21L20 4" s="#333" w={1.3} />
      <Dot x={3} y={21} />
      <Dot x={20} y={4} />
    </g>
  ),
  arc: (
    <g>
      <P d="M2 4q18-1 19 16" s="#333" w={1.3} />
      <Dot x={3} y={4} />
      <Dot x={16} y={8} />
      <Dot x={21} y={20} />
    </g>
  ),
  circle: <circle cx="12" cy="12" r="10" fill="none" stroke="#333" strokeWidth="1.3" />,
  fillet: <P d="M1 3h13q7 1 7 10v10M10 3h11v10" s="#b0b0b4" />,
  chamferLine: <P d="M1 3h12l9 9v11M13 3h9v9" s="#b0b0b4" />,
  rect: (
    <g>
      <P d="M2 5h20v14H2z" s="#333" w={1.4} />
      <Dot x={2} y={5} />
      <Dot x={22} y={19} />
    </g>
  ),
  spline: (
    <g>
      <P d="M2 14L7 3l3 9 6 8 6-10" s="#999" w={0.8} />
      <P d="M2 14q5-7 9-1 6 5 11-3" s="#8c3038" w={1.3} />
      <Dot x={2} y={14} c="#888" />
      <Dot x={7} y={4} c="#888" />
      <Dot x={8} y={11} />
      <Dot x={16} y={15} />
      <Dot x={16} y={21} c="#888" />
      <Dot x={22} y={10} c="#888" />
    </g>
  ),
  point: <P d="M12 3v18M3 12h18" s="#333" w={1.4} />,
  offset: <P d="M2 20V9q4-6 9-6 5 2 6 5 5 2 4 8-2 5-6 5zM6 16v-5q2-4 5-4 2 2 3 4 4 1 3 4-1 2-4 2H6z" s="#a0a0a0" w={1.2} />,
  trim: (
    <g>
      <P d="M1 14h12M5 1l11 21" s={dim} w={1.3} />
      <P d="M14 14h9" s={dim} strokeDasharray="2 1" />
      <P d="M12 12l7-7 3 3-7 6z" f="#e0e0e0" s={dim} />
    </g>
  ),
  extend: (
    <g>
      <P d="M1 14h21M5 1l11 21" s={dim} w={1.3} />
      <P d="M12 12l7-9 3 2-6 9z" f="#e0e0e0" s={dim} />
    </g>
  ),
  corner: (
    <g>
      <P d="M1 11h14v12" s={dim} w={1.3} />
      <P d="M15 1v10h9M11 6l10 10" s={dim} strokeDasharray="2 1" />
    </g>
  ),
  dimGrey: <P d="M1 9v11M22 9v11M1 14h21M5 11l-4 3 4 3M18 11l4 3-4 3M9 11l6-8h4l-3 4h3l-9 6" f="none" s={dim} w={1.3} />,
  perp: <P d="M2 14l8-8M5 17l9-9M16 10v11M10 21h13" s={dim} w={1.3} />,
  mirrorGrey: <P d="M2 4v18h20V4M2 4h4M22 4h-4M12 1v22M8 3v5M16 3v5M9 8h6" s={dim} w={1.6} />,
  showGrey: (
    <g>
      <P d="M1 8v9l6-5z" f="#ccc" s={dim} />
      <P d="M10 9l8-7M14 12l9-9M17 14v9M11 23h12" s={dim} w={1.4} />
    </g>
  ),
  conv1: <P d="M2 2h10v10H2zM11 13h12v9H11zM1 16h6v7H1zM14 13l7-7 2 2-6 6" f="#f6f6f6" s={dim} w={1.3} />,
  conv2: (
    <g>
      <P d="M10 3a5 5 0 1 0 1 5M13 9l7-7 3 2-7 7z" f="#eee" s={dim} w={1.6} />
      <P d="M2 16l8-4 6 3-3 5H3zM15 14h8v9h-8z" f="#d4d4d4" s={dim} />
    </g>
  ),
  conv3: (
    <g>
      <P d="M10 3a5 5 0 1 0 1 5M14 3v8" s={dim} w={1.8} />
      <P d="M2 14l10-3 10 5-6 6H4z" f="#dcdcdc" s={dim} />
      <P d="M3 18l10 2 9-4" s={dim} />
    </g>
  ),
};

const main = [
  'fresh open save | cut copy paste | undo v redo | play v | info | ? w',
  'fit v orient v sphere v section clip v face v | clipSet clipPlay w',
  'layers axes v | showHide palette | play v | measureLine v ruler w',
];
const feature = [
  'extrude revolve hole emboss offsetEmboss rib | datum pattern patternGeo mirror unite v split trimSheet divide shell thicken | blend faceBlend chamfer draft bodyTrim w',
  'moveFace v pullFace v deleteFace copyFace v groupFace v dimFace v patternFace pinkTri pinkMove v w',
  'surf1 surf2 surf3 surf4 surf5 surf6 surf7 v w',
];
const tools = [
  'stack stackList | tag | checkBlue checkGrey checkYellow | abc w',
  'plane1 plane2 list w',
  'spring spring2 tyre | springCut w',
  'tri tableIcon folderPlus folderCircle note brush | find v',
  'lockBox lockBox2 w',
  'plugCheck plugList plugTable axesPlane w',
  'section2 | t0 t1 t2 t3 t4 t5 t6 t7 t8 t9 t10 | radius1 radius2 | dia1 dia2 turn w',
];
const annotation = ['pmi1 v pmi2 v pmi3 v pmi4 v pmi5 v pmi6 v textA v magA swapA w'];
const assembly = [
  'asm1 asm2 asm3 v asm4 constrain showCon | asm5 asm6 asm7 | asm8 | chain chain2 tree | asm9 v w',
  'sketch !flag profile line arc circle fillet chamferLine rect spline point offset v | trim extend corner | dimGrey v | perp mirrorGrey showGrey v | conv1 conv2 conv3 w',
];

const tolerances = [
  ['1.00'],
  ['1.00', ['±.05', red]],
  ['1.00', ['+.05', red], ['−.02', red]],
  ['1.00', ['+.05', red], ['−.00', '#999']],
  ['1.00', ['+.00', '#999'], ['−.02', red]],
  ['1.00'],
  ['(1.00)'],
  ['10H7'],
  ['10H7', ['(10.01)', navy], ['10', navy]],
  ['10H7', ['(0.015)', navy], ['0', navy]],
  ['10', ['(0.015)', navy], ['0', navy]],
];

const snaps = [
  ['snapAll', true], ['snapEnd', true], ['snapMid', true], ['snapCurve', false],
  ['snapPoly', true], ['snapInt', false], ['snapCenter', true], ['snapQuad', false],
  ['snapPoint', true], ['snapOn', true], ['snapFace', false],
];

const menus = [
  ['件', 'F'], ['编辑', 'E'], ['视图', 'V'], ['插入', 'S'], ['格式', 'R'], ['工具', 'T'],
  ['装配', 'A'], ['产品制造信息', 'M'], ['信息', 'I'], ['分析', 'L'], ['首选项', 'P'],
  ['窗口', 'O'], ['GC工具箱', ''], ['帮助', 'H'],
];

const parts = [
  'Pieza 1_sldprt', 'Pieza 2_sldprt', 'Pieza 3_sldprt', 'Pieza 4_sldprt',
  'Pieza 5_sldprt', 'Pieza 6_sldprt', 'shou7',
];

function Icon({ name, size = 24 }) {
  return (
    <Glyph viewBox="0 0 24 24" $size={size} aria-hidden="true">
      {icons[name]}
    </Glyph>
  );
}

function Tolerance({ index }) {
  const [head, ...rest] = tolerances[index];
  return (
    <ToolButton>
      <TolText $boxed={index === 5} $color={index > 6 ? navy : '#333'}>{head}</TolText>
      {rest.map(([text, color]) => (
        <TolSmall key={text} $color={color}>{text}</TolSmall>
      ))}
    </ToolButton>
  );
}

function Tool({ token }) {
  if (token === '|') return <Divider />;
  if (token === 'v') return <Drop aria-label="more"><Caret /></Drop>;
  if (token === 'w') return <DropLow aria-label="toolbar options"><Caret /></DropLow>;
  if (token === '?') return <CommandFinder />;
  if (/^t\d+$/.test(token)) return <Tolerance index={Number(token.slice(1))} />;
  if (token[0] === '!') {
    return (
      <FinishButton disabled>
        <Icon name={token.slice(1)} />
        完成草图
      </FinishButton>
    );
  }
  return <ToolButton aria-label={token}><Icon name={token} /></ToolButton>;
}

function Bar({ groups, shift = 0, height = 34, lead }) {
  return (
    <BarRow $height={height}>
      {groups.map((group, i) => (
        <Group key={group} role="toolbar" $shift={i === 0 ? shift : 0}>
          {i === 0 ? lead : <Grip />}
          {group.split(' ').map((token, n) => (
            <Tool key={`${token}${n}`} token={token} />
          ))}
        </Group>
      ))}
    </BarRow>
  );
}

function CommandFinder() {
  return (
    <Finder>
      <FinderInput aria-label="查找命令" defaultValue="查找命令" />
      <Glyph viewBox="0 0 24 24" $size={16} aria-hidden="true">
        <circle cx="15" cy="9" r="7" fill="none" stroke="#444" strokeWidth="1.6" />
        <circle cx="15" cy="9" r="3" fill="none" stroke="#777" />
        <P d="M10 14l-8 8" s="#444" w={3} />
      </Glyph>
    </Finder>
  );
}

function SelectionBar() {
  return (
    <BarRow $height={36}>
      <FilterSelect $cut aria-label="选择过滤器" defaultValue="f">
        <option value="f">择过滤器</option>
      </FilterSelect>
      <FilterSelect aria-label="选择范围" defaultValue="a">
        <option value="a">整个装配</option>
      </FilterSelect>
      <SelectionTools>
        {'greyCross | greyFilter boxFilter v greyMove greyBack | marquee v | boxGrey boxBlue |'
          .split(' ')
          .map((token, n) => {
            if (token === '|') return <SlimDivider key={n} />;
            if (token === 'v') return <Drop key={n} aria-label="more"><Caret /></Drop>;
            return <SmallButton key={n} aria-label={token}><Icon name={token} size={17} /></SmallButton>;
          })}
        {snaps.map(([name, on]) => (
          <SnapButton key={name} $on={on} aria-pressed={on} aria-label={name}>
            <Icon name={name} size={17} />
          </SnapButton>
        ))}
        <SlimDivider />
        <SmallButton aria-label="grid"><Icon name="snapGrid" size={17} /></SmallButton>
      </SelectionTools>
    </BarRow>
  );
}

const gold = ['#fff0a8', '#f7cf4c', '#b8862c', '#7a5a1c'];

function Navigator() {
  return (
    <Side>
      <SideTitle>
        装配导航器
        <Maximize aria-label="maximize" />
      </SideTitle>
      <TreePanel>
        <TreeHead>描述性部件名<SortMark /></TreeHead>
        <Tree>
          <TreeRow $indent={4}>
            <Glyph viewBox="0 0 24 24" $size={18}>
              <P d="M2 20V5h7l2 3h8v3" f="#f4c84c" s="#8a6420" />
              <P d="M2 20l5-9h16l-5 9z" f="#ffdf74" s="#8a6420" w={1.3} />
            </Glyph>
            <TreeText $dark>截面</TreeText>
          </TreeRow>
          <TreeRow $indent={7}>
            <TreeCheck type="checkbox" defaultChecked aria-label="puma560" />
            <Glyph viewBox="0 0 24 24" $size={18}>
              <Box x={2} y={0} w={12} h={13} c={gold} />
              <Box x={2} y={11} w={11} h={12} c={gold} />
              <Box x={12} y={10} w={11} h={13} c={gold} />
            </Glyph>
            <TreeText $bold>puma560（顺序: 时..</TreeText>
          </TreeRow>
          <TreeRow $indent={9}>
            <Expander aria-label="expand">+</Expander>
            <Glyph viewBox="0 0 24 24" $size={18}>{icons.constrain}</Glyph>
            <TreeText $dark>约束</TreeText>
          </TreeRow>
          {parts.map((name, i) => (
            <TreeRow key={name} $indent={14}>
              <Branch viewBox="0 0 12 24">
                <path
                  d={i === parts.length - 1 ? 'M.5 0V12H9' : 'M.5 0V24M.5 12H9'}
                  fill="none"
                  stroke="#999"
                  strokeDasharray="1 1"
                />
              </Branch>
              <TreeCheck type="checkbox" defaultChecked aria-label={name} />
              <Glyph viewBox="0 0 24 24" $size={18}>
                <Box x={4} y={3} w={17} h={18} c={gold} />
              </Glyph>
              <TreeText $selected={i === 0}>{name}</TreeText>
            </TreeRow>
          ))}
        </Tree>
        <ScrollTrack>
          <ScrollThumb />
          <Glyph viewBox="0 0 24 24" $size={16}><P d="M9 4l8 8-8 8" s="#444" w={2.6} /></Glyph>
        </ScrollTrack>
      </TreePanel>
      <Splitter />
      {['预览', '相依性'].map((name) => (
        <Section key={name}>
          {name}
          <Glyph viewBox="0 0 24 24" $size={16}><P d="M3 3l9 15 9-15" s="#2c8498" w={4} /></Glyph>
        </Section>
      ))}
    </Side>
  );
}

// Floor and wall of the scene share one very large radius, stops are in px from the horizon.
const sceneRadius = 11268;
const sceneStops = [
  [-424, '#757575'], [-260, '#797979'], [-160, '#787878'], [-90, '#737373'], [-45, '#6b6b6b'],
  [-10, '#626262'], [0, '#5f5f5f'], [3, '#686868'], [12, '#777'], [25, '#7a7a7a'],
  [45, '#717171'], [70, '#636363'], [95, '#606060'], [300, '#5e5e5e'],
];

function Scene() {
  return (
    <SceneSvg viewBox="0 0 1469 725" preserveAspectRatio="xMidYMid slice">
      <defs>
        <radialGradient id="room" gradientUnits="userSpaceOnUse" cx="735" cy={302 + sceneRadius} r={sceneRadius + 300}>
          {sceneStops.map(([d, color]) => (
            <stop key={d} offset={(sceneRadius + d) / (sceneRadius + 300)} stopColor={color} />
          ))}
        </radialGradient>
        <linearGradient id="column">
          <stop offset="0" stopColor="#b84c46" />
          <stop offset="0.4" stopColor="#cd5a52" />
          <stop offset="0.62" stopColor="#e0645a" />
          <stop offset="0.8" stopColor="#c24a42" />
          <stop offset="0.94" stopColor="#a8403c" />
          <stop offset="1" stopColor="#d8584e" />
        </linearGradient>
        <linearGradient id="barrel" x1="0.4" y1="0" x2="0.6" y2="1">
          <stop offset="0" stopColor="#e8e800" />
          <stop offset="0.35" stopColor="#ffff0a" />
          <stop offset="0.7" stopColor="#d6d600" />
          <stop offset="1" stopColor="#969600" />
        </linearGradient>
        <linearGradient id="ball">
          <stop offset="0" stopColor="#a038d8" />
          <stop offset="0.6" stopColor="#cf50c0" />
          <stop offset="1" stopColor="#e25a8c" />
        </linearGradient>
      </defs>
      <rect width="1469" height="725" fill="url(#room)" />
      <g transform="translate(543 117) scale(0.3333)" strokeLinejoin="round">
        <path fill="#3c3c3c" d="M65 1100L255 1084L512 1066V1094L312 1112L333 1124L205 1131L95 1138L78 1126L100 1118Z" />
        {/* upper arm */}
        <ellipse cx="92" cy="258" rx="27" ry="58" fill="#00c4c4" stroke="#055" strokeWidth="3" />
        <path fill="#00cfcf" stroke="#074a4a" strokeWidth="3" d="M325 127L610 55Q760 48 905 50L950 57Q1075 230 955 425L700 434Q600 420 310 370Z" />
        <path fill="#00e2e2" stroke="#067070" strokeWidth="2" d="M325 127L610 55L665 58L330 140Z" />
        <path fill="none" stroke="#067070" strokeWidth="2" d="M330 140L665 60L950 57" />
        <path fill="#00bcbc" stroke="#0a5050" strokeWidth="3" d="M838 158Q760 90 670 125Q610 170 612 270L622 300Q615 320 635 330L630 350Q650 372 672 362L715 382L760 350Z" />
        <path fill="#00d4d4" stroke="#0a5050" strokeWidth="2" d="M838 160Q760 100 680 135Q625 180 628 250Q640 320 715 368L800 300Z" />
        <g fill="none" stroke="#0a5050" strokeWidth="3">
          <circle cx="637" cy="168" r="9" />
          <circle cx="618" cy="298" r="8" />
          <circle cx="640" cy="345" r="11" />
          <path d="M745 108l25 6" />
        </g>
        <g fill="#176a6c">
          {[[714, 78], [892, 74], [963, 98], [996, 214], [972, 359], [369, 257], [325, 281]].map(([x, y]) => (
            <circle key={x} cx={x} cy={y} r="6" />
          ))}
        </g>
        <path fill="#16b030" d="M710 390L720 380V432H697Z" />
        {/* base plate */}
        <path fill="#d4574d" stroke="#ee6256" strokeWidth="5" d="M515 1000L560 996L700 992L920 985L1010 1040Q1098 1055 1098 1100Q1090 1128 1000 1138Q850 1150 700 1135L560 1122L513 1108Z" />
        <path fill="#c9524a" d="M572 1015L720 995L800 1005L800 1070L620 1080L572 1120Z" />
        <path fill="#ef7064" stroke="#b8443e" strokeWidth="3" d="M918 1050Q990 1040 1050 1048Q1065 1062 1030 1074L940 1088Z" />
        <path fill="#c9504a" d="M600 1086Q850 1116 1090 1080L1096 1108Q950 1146 700 1134L600 1122Z" />
        <g stroke="#d85a50" strokeWidth="3" opacity="0.6">
          {[740, 830, 930, 1020, 1060].map((x) => (
            <path key={x} d={`M${x} 1100V1132`} />
          ))}
        </g>
        <path fill="#ef7366" d="M680 1080L740 1066L745 1086Z" />
        <path fill="#a83c38" d="M602 1094h78v26h-78z" />
        <path fill="#a03a36" d="M522 1014L566 1022V1104L522 1092Z" />
        <path fill="#cc5048" d="M534 1040Q552 1036 560 1046V1080L534 1078V1066L546 1064V1052L534 1050Z" />
        <path fill="none" stroke="#f06458" strokeWidth="6" d="M516 1000L572 1014V1122" />
        <path fill="#9a7a34" d="M655 1110h16v24h-16zM686 1108h16v26h-16z" />
        {/* motor and column */}
        <path fill="url(#column)" stroke="#ee6256" strokeWidth="4" d="M558 828L690 826V1008Q620 1018 558 1004Z" />
        <path fill="url(#column)" stroke="#ee6256" strokeWidth="4" d="M568 730Q625 718 686 730L684 822Q625 836 566 822Z" />
        <path fill="url(#column)" d="M717 362H926V1050Q900 1066 870 1010L717 1000Z" />
        <path fill="#e0655b" d="M914 364h12v690l-12-20z" />
        <path fill="#a43c38" d="M852 1010l36 58-8 6-26-8z" />
        <path fill="#d4574d" d="M888 1066L916 1030L920 1070Z" />
        <path fill="#d8b0a8" d="M752 1084l20-15 24 20z" />
        <path fill="#5c8ae8" d="M816 935Q832 1010 816 1060Q800 1000 816 935Z" />
        <path stroke="#5c8ae8" strokeWidth="4" strokeDasharray="8 5" d="M816 1060v28" />
        <text x="758" y="924" fontSize="36" fontFamily="Liberation Sans" fill="#5a34d8">ZC</text>
        {/* shoulder */}
        <ellipse cx="748" cy="247" rx="101" ry="106" fill="#1c6060" />
        <path fill="url(#barrel)" stroke="#6c6a00" strokeWidth="3" d="M868 169L750 147Q655 155 656 250Q662 322 718 350L840 368Z" />
        <path fill="#c8bc20" stroke="#6c6a00" strokeWidth="3" d="M725 265Q760 335 840 368L718 366Z" />
        <path fill="#dcd8f0" d="M728 367Q770 328 836 367Z" />
        <ellipse cx="868" cy="270" rx="93" ry="101" fill="#caca00" stroke="#3c3c00" strokeWidth="5" />
        <path fill="url(#ball)" d="M718 370H850Q872 400 874 436A82 82 0 0 1 718 474Z" />
        <path fill="none" stroke="#702c60" strokeWidth="3" strokeDasharray="12 8" d="M718 368H830" />
        {/* forearm */}
        <path fill="#0000a4" stroke="#00006a" strokeWidth="3" d="M80 135Q130 92 190 88Q290 92 335 138L280 748L142 744Z" />
        <path fill="#0000cc" stroke="#2430dc" strokeWidth="3" d="M114 144Q160 98 205 95Q290 100 334 140L278 748L172 748Z" />
        <path fill="#0808b8" stroke="#00006a" strokeWidth="2" d="M80 135Q130 92 190 88L205 95Q155 102 114 144Z" />
        <g fill="#2c3a9c">
          {[[162, 128], [286, 126], [134, 192], [314, 187], [163, 478], [288, 474], [182, 666], [210, 730], [240, 728]].map(([x, y]) => (
            <circle key={`${x}${y}`} cx={x} cy={y} r="7" />
          ))}
        </g>
        {/* wrist */}
        <path fill="#d40000" stroke="#8a0000" strokeWidth="3" d="M144 746L276 750L273 800Q285 860 262 890Q232 920 195 896Q150 880 145 845Q143 815 156 800Z" />
        <circle cx="225" cy="855" r="51" fill="#d80000" stroke="#a40000" strokeWidth="2" />
        <path fill="none" stroke="#8a0000" strokeWidth="3" d="M152 800L272 804M176 750V805" />
        <circle cx="224" cy="854" r="9" fill="#50a030" stroke="#205010" strokeWidth="3" />
        <path fill="#20a840" stroke="#0c5020" strokeWidth="3" d="M186 902L236 906V924H184Z" />
        <path fill="#e0a020" stroke="#7a5408" strokeWidth="3" d="M184 926L237 924V946L215 952L184 946Z" />
        <path fill="#d8a428" stroke="#4c3404" strokeWidth="4" d="M194 960L208 952V996L194 990ZM212 960H226V994L212 998Z" />
        {/* cursor */}
        <path stroke="#222" strokeWidth="9" d="M788 390v96M741 437h96" />
        <path stroke="#fff" strokeWidth="4" d="M788 390v96M741 437h96" />
        <path fill="#111" d="M797 470h41v17h-41z" />
        <path fill="#fff" d="M801 474h8v9h-8zM813 474h8v9h-8zM825 474h8v9h-8z" />
      </g>
      <g>
        <path fill="#b4b4b4" d="M27 638L57 637V663H27Z" />
        <path stroke="#2f9a38" strokeWidth="2" d="M22 665L59 663" />
        <path fill="#1c7a28" d="M17 666L32 663V667Z" />
        <path stroke="#1830b8" strokeWidth="3" d="M59 662V634" />
        <path fill="#1830b8" d="M59 624l4 11h-8z" />
        <circle cx="59" cy="664" r="4" fill="#eee" />
        <text x="56" y="624" fontSize="10" fontFamily="Liberation Sans" fill="#3450e0">Z</text>
      </g>
    </SceneSvg>
  );
}

function App() {
  return (
    <Page>
      <GlobalStyle />
      <DesktopEdge />
      <TitleBar>
        <Title>NX 10 - 建模 - [puma560.prt  （修改的）  ]</Title>
        <Brand>SIEMENS</Brand>
        <Minimize aria-label="minimize" />
      </TitleBar>
      <MenuBar>
        {menus.map(([label, key]) => (
          <MenuItem key={label} $wide={key === 'P'}>
            {label}{key && <>(<u>{key}</u>)</>}
          </MenuItem>
        ))}
      </MenuBar>
      <Bar groups={main} height={36} lead={<><StartText>动</StartText><Drop aria-label="more"><Caret /></Drop></>} />
      <Bar groups={feature} shift={-4} />
      <Bar groups={tools} shift={-15} />
      <SelectionBar />
      <Work>
        <Navigator />
        <Scene />
      </Work>
      <Bar groups={annotation} shift={-15} />
      <Bar groups={assembly} shift={-6} />
      <Status>
        <StatusHint>象并使用 MB3，或者双击某一对象</StatusHint>
        <StatusName>PIEZA 1_SLDPRT</StatusName>
        <StatusIcons>
          <Icon name="flag" size={16} />
          <Glyph viewBox="0 0 24 24" $size={16}>
            <P d="M1 7V1h6M17 1h6v6M1 17v6h6M23 17v6h-6M7 6h11v12H7z" s="#444" w={2} />
          </Glyph>
        </StatusIcons>
      </Status>
      <Foot />
    </Page>
  );
}

const GlobalStyle = createGlobalStyle`
  * {
    box-sizing: border-box;
  }
  body {
    margin: 0;
    background: #fff;
    color: #1c1c1c;
    font: 14px "Open Sans", "Noto Sans CJK SC", sans-serif;
    overflow: hidden;
  }
  button {
    padding: 0;
    border: 0;
    background: none;
    color: inherit;
    font: inherit;
  }
`;

const Page = styled.div`
  min-height: 100vh;
  display: flex;
  flex-direction: column;
  overflow: hidden;
`;

const DesktopEdge = styled.div`
  height: 14px;
  background:
    radial-gradient(circle at 99% 100%, #88847e 0, transparent 24px),
    linear-gradient(90deg, #8d8884, #a69d97 12%, #bbaea0 35%, #beb6a9 60%, #c4b39e 84%, #a8a198);
`;

const TitleBar = styled.header`
  height: 38px;
  display: flex;
  align-items: center;
  padding: 2px 7px 0 0;
`;

const Title = styled.h1`
  flex: 1;
  margin: 0 0 0 -2px;
  font-size: 15px;
  font-weight: 400;
  line-height: 20px;
  white-space: pre;
`;

const Brand = styled.span`
  margin-right: 32px;
  color: #168c84;
  font-size: 16px;
  font-weight: 700;
  line-height: 20px;
`;

const Minimize = styled.button`
  width: 8px;
  height: 10px;
  border-bottom: 2px solid #444;
`;

const MenuBar = styled.nav`
  height: 31px;
  display: flex;
  align-items: center;
  gap: 15px;
  padding-bottom: 2px;
  background: #c5d6d6;
`;

const MenuItem = styled.button`
  flex: none;
  line-height: 20px;
  white-space: nowrap;
  margin-left: ${({ $wide }) => ($wide ? '7px' : '0')};

  &:first-child {
    margin-left: -6px;
  }
`;

const BarRow = styled.div`
  flex: none;
  height: ${({ $height }) => $height}px;
  display: flex;
  align-items: stretch;
`;

const Group = styled.div`
  display: flex;
  align-items: center;
  flex: none;
  margin-left: ${({ $shift }) => $shift}px;
  padding-right: 2px;
  border-right: 1px solid #d4d8d8;
  border-bottom: 1px solid #d4d8d8;
`;

const Grip = styled.span`
  width: 8px;
  align-self: stretch;
  margin: 3px 0;
  border-left: 4px solid transparent;

  &::before {
    content: '';
    display: block;
    height: 100%;
    border-left: 2px dotted #a4a8a8;
  }
`;

const ToolButton = styled.button`
  width: 31px;
  height: 30px;
  flex: none;
  display: flex;
  flex-direction: column;
  align-items: center;
  justify-content: center;
`;

const FinishButton = styled(ToolButton)`
  width: 90px;
  flex-direction: row;
  justify-content: flex-start;
  gap: 5px;
  padding-left: 3px;
  color: #b4b4b4;
  white-space: nowrap;
`;

const Drop = styled.button`
  width: 12px;
  height: 24px;
  flex: none;
  display: flex;
  align-items: center;
  justify-content: center;
`;

const DropLow = styled(Drop)`
  width: 11px;
  align-items: flex-end;
`;

const Caret = styled.span`
  border: 3px solid transparent;
  border-top-color: #111;
  border-bottom: 0;
`;

const Divider = styled.span`
  width: 1px;
  flex: none;
  align-self: stretch;
  margin: 3px 3px 3px 2px;
  background: #d0d4d4;
`;

const SlimDivider = styled(Divider)`
  margin: 2px 3px;
`;

const Glyph = styled.svg`
  width: ${({ $size }) => $size}px;
  height: ${({ $size }) => $size}px;
  flex: none;
  overflow: visible;
`;

const TolText = styled.span`
  color: ${({ $color }) => $color};
  font: 12px/11px "Liberation Sans", sans-serif;
  padding: ${({ $boxed }) => ($boxed ? '1px 0' : '0')};
  border: ${({ $boxed }) => ($boxed ? `1px solid ${red}` : '0')};
`;

const TolSmall = styled.span`
  color: ${({ $color }) => $color};
  font: 9px/8px "Liberation Sans", sans-serif;
`;

const StartText = styled.span`
  width: 13px;
  display: flex;
  justify-content: flex-end;
  white-space: nowrap;
`;

const Finder = styled.label`
  width: 156px;
  height: 24px;
  margin: 0 5px;
  padding-right: 4px;
  display: flex;
  align-items: center;
  border: 1px solid #8c9090;
`;

const FinderInput = styled.input`
  flex: 1;
  min-width: 0;
  padding: 0 1px;
  border: 0;
  outline: 0;
  background: none;
  font: inherit;
  color: inherit;
`;

const FilterSelect = styled.select`
  align-self: center;
  flex: none;
  width: ${({ $cut }) => ($cut ? '125px' : '175px')};
  height: 24px;
  margin: ${({ $cut }) => ($cut ? '0 8px 0 -8px' : '0')};
  padding: 0 2px;
  appearance: none;
  border: 1px solid #9a9e9e;
  border-radius: 0;
  color: inherit;
  font: inherit;
  line-height: 20px;
  background:
    linear-gradient(to bottom right, #111 50%, transparent 50%) right 7px center / 4px 4px no-repeat,
    linear-gradient(to bottom left, #111 50%, transparent 50%) right 11px center / 4px 4px no-repeat,
    #fff;
`;

const SelectionTools = styled.div`
  display: flex;
  align-items: center;
  padding-left: 5px;
`;

const SmallButton = styled.button`
  width: 22px;
  height: 24px;
  display: flex;
  align-items: center;
  justify-content: center;
`;

const SnapButton = styled(SmallButton)`
  width: 23px;
  border: 1px solid ${({ $on }) => ($on ? '#a8bcbc' : 'transparent')};
  background: ${({ $on }) => ($on ? '#c5d6d6' : 'none')};
`;

const Work = styled.main`
  flex: 1;
  min-height: 0;
  display: flex;
  border-top: 1px solid #6c7070;
`;

const Side = styled.aside`
  width: 207px;
  flex: none;
  display: flex;
  flex-direction: column;
  padding: 0 9px 5px 0;
  border-right: 1px solid #a0a4a4;
`;

const SideTitle = styled.h2`
  height: 30px;
  margin: 0 0 0 -12px;
  display: flex;
  align-items: center;
  justify-content: space-between;
  font-size: 15px;
  font-weight: 400;
`;

const Maximize = styled.button`
  width: 14px;
  height: 13px;
  margin-right: 7px;
  border: 1px solid #222;
  border-top-width: 2px;
`;

const TreePanel = styled.section`
  flex: 1;
  min-height: 0;
  display: flex;
  flex-direction: column;
  border: 1px solid #c8cccc;
  border-left: 0;
  overflow: hidden;
`;

const TreeHead = styled.div`
  height: 25px;
  flex: none;
  display: flex;
  align-items: center;
  gap: 18px;
  text-indent: -8px;
  font-size: 15px;
  line-height: 23px;
  background: #eee;
  border-bottom: 1px solid #c8cccc;
`;

const SortMark = styled.span`
  border: 5px solid transparent;
  border-bottom-color: #222;
  border-top: 0;
`;

const Tree = styled.ul`
  flex: 1;
  min-height: 240px;
  margin: 0;
  padding: 0;
  overflow: hidden;
  list-style: none;
  background: repeating-linear-gradient(#fff 0 23px, #e6e6e6 23px 24px, #f8f8f8 24px 47px, #e6e6e6 47px 48px);
`;

const TreeRow = styled.li`
  height: 24px;
  display: flex;
  align-items: center;
  padding-left: ${({ $indent }) => $indent}px;
  white-space: nowrap;
`;

const TreeText = styled.span`
  flex: 1;
  padding-left: 2px;
  line-height: 23px;
  font-size: 15px;
  font-weight: ${({ $bold }) => ($bold ? 700 : 400)};
  color: ${({ $dark, $selected }) => ($dark ? '#222' : $selected ? '#fff' : '#a2a2a2')};
  background: ${({ $selected }) => ($selected ? '#99ccff' : 'none')};
`;

const TreeCheck = styled.input`
  appearance: none;
  width: 12px;
  height: 12px;
  flex: none;
  margin: 0 1px 0 0;
  border: 1px solid #111;
  background: #fff;

  &::after {
    content: '';
    display: block;
    width: 5px;
    height: 9px;
    margin: -1px 0 0 3px;
    border: solid #b4b4b4;
    border-width: 0 2px 2px 0;
    transform: rotate(40deg);
  }
`;

const Expander = styled.button`
  width: 11px;
  height: 11px;
  margin-right: 3px;
  border: 1px solid #c4c4c4;
  background: #fff;
  font-size: 13px;
  line-height: 8px;
`;

const Branch = styled.svg`
  width: 12px;
  height: 24px;
  flex: none;
`;

const ScrollTrack = styled.div`
  height: 22px;
  flex: none;
  display: flex;
  align-items: center;
  justify-content: space-between;
  padding: 0 4px 0 7px;
  background: #efefef;
`;

const ScrollThumb = styled.span`
  width: 75px;
  height: 20px;
  background: #cbcbcb;
`;

const Splitter = styled.div`
  height: 5px;
  flex: none;
  background: #dcdcdc;
  border-bottom: 1px solid #b4b8b8;
`;

const Section = styled.button`
  height: 28px;
  flex: none;
  display: flex;
  align-items: center;
  justify-content: space-between;
  margin-left: -9px;
  padding-right: 6px;
  color: #3a879c;
  font-size: 18px;
  line-height: 26px;
  border-bottom: 2px solid #c8cccc;
`;

const SceneSvg = styled.svg`
  flex: 1;
  min-width: 0;
  height: 100%;
  background: #757575;
`;

const Status = styled.footer`
  height: 24px;
  flex: none;
  display: grid;
  grid-template-columns: 47% 1fr auto;
  align-items: center;
  padding-bottom: 2px;
  border-top: 1px solid #989c9c;
  border-bottom: 1px solid #989c9c;
  font-weight: 700;
  line-height: 18px;
`;

const StatusHint = styled.span`
  margin-left: -7px;
  white-space: nowrap;
`;

const StatusName = styled.span`
  padding-left: 2px;
  font-size: 15px;
`;

const StatusIcons = styled.span`
  display: flex;
  gap: 5px;
  margin-right: -12px;
`;

const Foot = styled.div`
  height: 7px;
  flex: none;
  background: #c5d6d6;
`;

export default App;
